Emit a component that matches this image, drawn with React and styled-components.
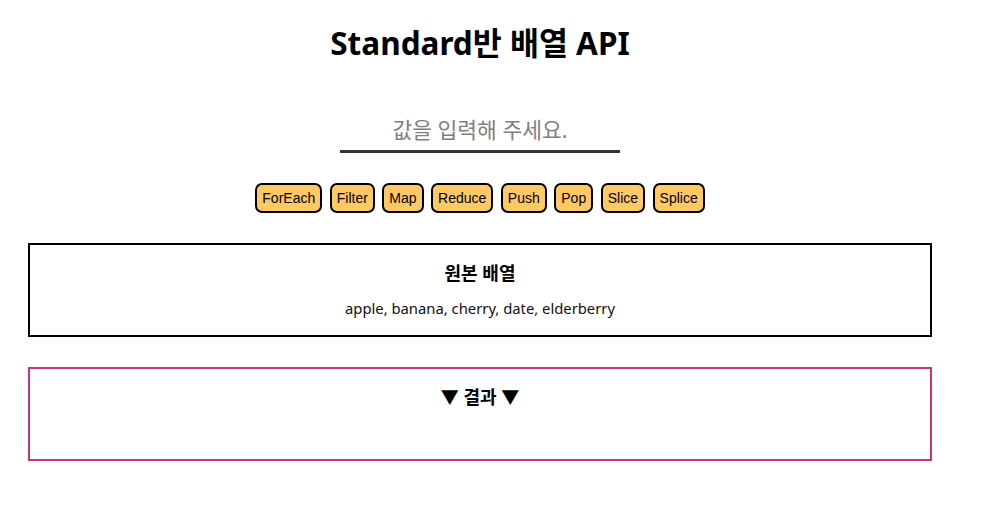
import React, { useState } from "react";
import styled, { createGlobalStyle } from "styled-components";

const Global = createGlobalStyle`
  body {
    margin: 8px;
    background: #ffffff;
    font-family: "Noto Sans", "Noto Sans CJK KR", sans-serif;
    color: #000;
  }
`;

const Page = styled.div`
  width: 944px;
  display: flex;
  flex-direction: column;
  align-items: center;
`;

const Title = styled.h1`
  margin: 15px 0 0;
  font-size: 31.5px;
  line-height: 40px;
  font-weight: 700;
  font-family: "Noto Sans", "Noto Sans CJK KR", sans-serif;
`;

const Input = styled.input`
  margin-top: 50px;
  width: 280px;
  height: 40px;
  box-sizing: border-box;
  border: none;
  border-bottom: 3px solid #3d3232;
  outline: none;
  text-align: center;
  font-size: 21.5px;
  font-family: "Noto Sans", "Noto Sans CJK KR", sans-serif;
  padding: 0 0 4px;
  background: transparent;
  &::placeholder {
    color: #808080;
  }
`;

const ButtonRow = styled.div`
  margin-top: 30px;
  display: flex;
  gap: 7.5px;
`;

const Method = styled.button`
  height: 30px;
  box-sizing: border-box;
  padding: 0 5px;
  border: 2px solid #000;
  border-radius: 7px;
  background: #fec865;
  font-family: "Liberation Sans", Arial, sans-serif;
  font-size: 14px;
  color: #000;
  cursor: pointer;
`;

const Box = styled.section`
  align-self: stretch;
  margin: ${(p) => p.$top}px 20px 0;
  border: 2px solid ${(p) => p.$color};
  padding: 16px 16px 16px;
  display: flex;
  flex-direction: column;
  align-items: center;
  gap: 12px;
`;

const BoxTitle = styled.h3`
  margin: 0;
  font-size: 18px;
  line-height: 24px;
  font-weight: 700;
`;

const BoxContent = styled.div`
  font-size: 14.8px;
  line-height: 22px;
  min-height: 22px;
  color: #111;
`;

const methods = ["ForEach", "Filter", "Map", "Reduce", "Push", "Pop", "Slice", "Splice"];
const fruits = ["apple", "banana", "cherry", "date", "elderberry"];

export default function App() {
  const [value, setValue] = useState("");
  const [result] = useState("");
  return (
    <>
      <Global />
      <Page>
        <Title>Standard반 배열 API</Title>
        <Input
          placeholder="값을 입력해 주세요."
          value={value}
          onChange={(e) => setValue(e.target.value)}
        />
        <ButtonRow>
          {methods.map((m) => (
            <Method key={m}>{m}</Method>
          ))}
        </ButtonRow>
        <Box $top={30} $color="#000">
          <BoxTitle>원본 배열</BoxTitle>
          <BoxContent>{fruits.join(", ")}</BoxContent>
        </Box>
        <Box $top={30} $color="#cc3371">
          <BoxTitle>▼ 결과 ▼</BoxTitle>
          <BoxContent>{result}</BoxContent>
        </Box>
      </Page>
    </>
  );
}
